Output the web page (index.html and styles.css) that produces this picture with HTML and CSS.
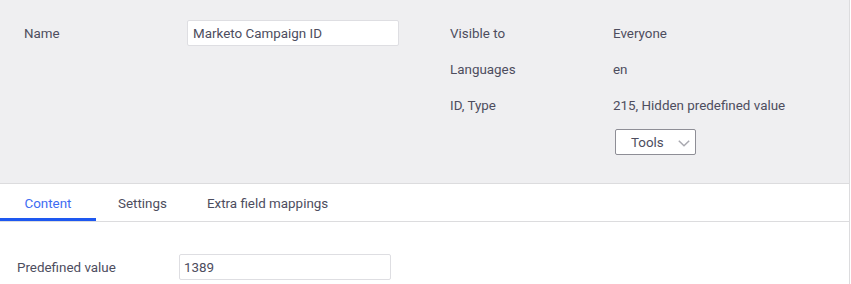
FILE: index.html
```html
<!DOCTYPE html>
<html>
<head>
<meta charset="utf-8">
<link rel="stylesheet" href="styles.css">
</head>
<body>
<div class="page">
  <div class="header">
    <div class="label">Name</div>
    <div class="cell"><input class="field name-field" type="text" value="Marketo Campaign ID"></div>
    <div class="label">Visible to</div>
    <div class="value">Everyone</div>

    <div class="label"></div>
    <div class="cell"></div>
    <div class="label">Languages</div>
    <div class="value">en</div>

    <div class="label"></div>
    <div class="cell"></div>
    <div class="label">ID, Type</div>
    <div class="value">215, Hidden predefined value</div>

    <div class="label"></div>
    <div class="cell"></div>
    <div class="label"></div>
    <div class="tools-cell">
      <button class="tools" type="button">
        <span class="tools-text">Tools</span>
        <svg class="chev" width="12" height="7" viewBox="0 0 12 7"><path d="M0.8 0.8 L6 5.8 L11.2 0.8" fill="none" stroke="#a9a9b0" stroke-width="1.5"/></svg>
      </button>
    </div>
  </div>
  <div class="tabs">
    <div class="tab active">Content</div>
    <div class="tab tab-settings">Settings</div>
    <div class="tab tab-extra">Extra field mappings</div>
  </div>
  <div class="content">
    <div class="content-label">Predefined value</div>
    <input class="field value-field" type="text" value="1389">
  </div>
</div>
</body>
</html>
```

FILE: styles.css
```css
html, body {
  margin: 0;
  padding: 0;
  background: #ffffff;
}
body {
  font-family: Roboto, "Liberation Sans", sans-serif;
  font-size: 13.4px;
  color: #4d4d5e;
}
.page {
  width: 849px;
  height: 284px;
  border-right: 1px solid #dcdcde;
  box-sizing: content-box;
}
.header {
  background: #efeff1;
  border-bottom: 1px solid #dcdcde;
  height: 184px;
  box-sizing: border-box;
  padding: 15px 0 0 24px;
  display: grid;
  grid-template-columns: 163px 263px 163px 1fr;
  grid-template-rows: 36px 36px 36px auto;
  align-items: center;
}
.label, .value, .cell {
  height: 36px;
  display: flex;
  align-items: center;
}
.field {
  font-family: Roboto, "Liberation Sans", sans-serif;
  font-size: 13.4px;
  color: #4d4d5e;
  background: #ffffff;
  border: 1px solid #dedee2;
  border-radius: 2px;
  box-sizing: border-box;
  width: 212px;
  height: 26px;
  margin: 0;
  outline: none;
}
.name-field {
  padding: 0 5px;
}
.tools-cell {
  align-self: start;
  padding-top: 6px;
}
.tools {
  margin-left: 2px;
  width: 81px;
  height: 26px;
  box-sizing: border-box;
  border: 1px solid #8e8e96;
  border-radius: 2px;
  background: #ffffff;
  display: flex;
  align-items: center;
  padding: 0 0 0 15px;
  font-family: Roboto, "Liberation Sans", sans-serif;
  font-size: 13.4px;
  color: #4d4d5e;
}
.tools-text {
  flex: 0 0 auto;
}
.chev {
  margin-left: 14px;
  margin-top: 3px;
}
.tabs {
  display: flex;
  height: 38px;
  box-sizing: border-box;
  border-bottom: 1px solid #dcdcde;
}
.tab {
  display: flex;
  align-items: center;
  padding: 4px 19px 0 19px;
  color: #4d4d5e;
  border-bottom: 3px solid transparent;
}
.tab.active {
  width: 96px;
  box-sizing: border-box;
  justify-content: center;
  padding: 4px 0 0 0;
  color: #3d6cf2;
  border-bottom: 3px solid #1e58f0;
}
.tab-settings {
  padding-left: 22px;
  padding-right: 21px;
}
.content {
  display: flex;
  align-items: center;
  padding: 32px 0 0 17px;
}
.content-label {
  width: 162px;
}
.value-field {
  padding: 0 4px;
}
```
